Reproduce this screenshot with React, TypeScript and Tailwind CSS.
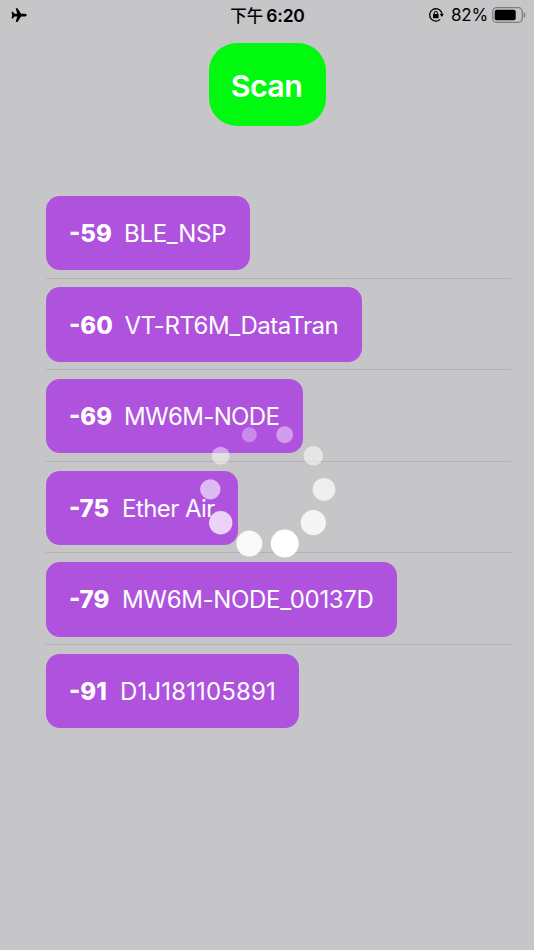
const DEVICES = [
  { rssi: -59, name: "BLE_NSP", width: "w-[204px]", offset: "w-[55px]", tracking: "tracking-[-0.3px]" },
  { rssi: -60, name: "VT-RT6M_DataTran", width: "w-[316px]", offset: "w-[55.5px]", tracking: "tracking-[-0.47px]" },
  { rssi: -69, name: "MW6M-NODE", width: "w-[257px]", offset: "w-[55px]", tracking: "tracking-[-0.65px]" },
  { rssi: -75, name: "Ether Air", width: "w-[192px]", offset: "w-[53px]", tracking: "tracking-[-0.55px]" },
  { rssi: -79, name: "MW6M-NODE_00137D", width: "w-[351px]", offset: "w-[53px]", tracking: "tracking-[-0.32px]" },
  { rssi: -91, name: "D1J181105891", width: "w-[253px]", offset: "w-[51px]", tracking: "tracking-[0.15px]" },
];

// Spinner dots, clockwise from the smallest one
const DOTS = [
  { cx: 59.3, cy: 14.8, r: 7.5, opacity: 0.33 },
  { cx: 94.7, cy: 14.8, r: 8.5, opacity: 0.43 },
  { cx: 123.3, cy: 35.7, r: 9.8, opacity: 0.54 },
  { cx: 134, cy: 69.4, r: 11.4, opacity: 0.7 },
  { cx: 123.3, cy: 102.7, r: 12.6, opacity: 0.82 },
  { cx: 94.7, cy: 123.6, r: 14, opacity: 0.99 },
  { cx: 59.3, cy: 123.6, r: 13, opacity: 0.89 },
  { cx: 30.7, cy: 102.7, r: 11.7, opacity: 0.75 },
  { cx: 20.3, cy: 69.4, r: 10.2, opacity: 0.6 },
  { cx: 30.7, cy: 35.7, r: 9, opacity: 0.47 },
];

function StatusBar() {
  return (
    <header className="grid h-[30px] grid-cols-3 items-center pl-[11px] pr-[8px] text-black">
      <svg width="16" height="16" viewBox="0 0 16 16">
        <path
          d="M15.7 8.2c0-.8-1-1.4-2.3-1.4h-3.3L6.5 1.3H4.7l1.5 5.5H3.5L1.9 4.8H.5l.7 3.4-.7 3.4h1.4l1.6-2h2.7l-1.5 5.5h1.8l3.6-5.5h3.3c1.3 0 2.3-.6 2.3-1.4Z"
          fill="currentColor"
        />
      </svg>
      <div className="flex items-center justify-center gap-[3px] whitespace-nowrap pr-[2px] leading-none">
        <span className="font-['Noto_Sans_CJK_SC',sans-serif] text-[16.5px] font-medium leading-none">下午</span>
        <span className="pt-px text-[17.5px] font-semibold tracking-[-0.2px]">6:20</span>
      </div>
      <div className="flex items-center justify-end">
        <svg className="mr-[7px] shrink-0" width="16" height="16" viewBox="0 0 16 16" fill="none">
          <path d="M13.4 5.1A6.2 6.2 0 1 0 12.2 12.4" stroke="currentColor" strokeWidth="1.3" />
          <path d="M13.4 5.1c.4.8.6 1.5.6 2.5" stroke="currentColor" strokeWidth="1.3" />
          <path d="M11.8 7h4l-2 3Z" fill="currentColor" />
          <rect x="5" y="7.1" width="5.6" height="4.2" rx=".6" fill="currentColor" />
          <path d="M6.2 7.3V6a1.6 1.6 0 0 1 3.2 0v1.3" stroke="currentColor" strokeWidth="1" />
        </svg>
        <span className="mr-[4px] pt-px text-[17px] leading-none tracking-[-0.2px]">82%</span>
        <svg className="shrink-0" width="34" height="16" viewBox="0 0 34 16">
          <rect x=".7" y=".7" width="29.6" height="14.6" rx="4" fill="none" stroke="#7c7c7e" strokeWidth="1.3" />
          <rect x="2.7" y="2.7" width="21" height="10.6" rx="2" fill="currentColor" />
          <path d="M31.8 5.2c2.1.8 2.1 4.8 0 5.6Z" fill="#7c7c7e" />
        </svg>
      </div>
    </header>
  );
}

function Spinner() {
  return (
    <svg className="absolute left-[190px] top-[420px]" width="160" height="145" viewBox="0 0 160 145">
      {DOTS.map((dot) => (
        <circle key={`${dot.cx}-${dot.cy}`} cx={dot.cx} cy={dot.cy} r={dot.r} fill="#fff" fillOpacity={dot.opacity} />
      ))}
    </svg>
  );
}

export default function App() {
  return (
    <div className="relative h-[950px] w-[534px] overflow-hidden bg-[#c6c6c8] font-['Inter',sans-serif]">
      <StatusBar />

      <main>
        <div className="flex justify-center pt-[13px]">
          <button className="h-[83px] w-[117px] rounded-[28px] bg-[#00f90f] pr-px pt-[2px] text-[30.5px] font-semibold tracking-[-0.7px] text-white">
            Scan
          </button>
        </div>

        <ul className="ml-[46px] mr-[23px] mt-[61px]">
          {DEVICES.map((device) => (
            <li
              key={device.name}
              className="flex h-[91.6px] items-center border-b border-[#b2b2b5] pt-[1.6px] last:border-b-0 last:pt-0"
            >
              <div
                className={`flex h-[74.4px] items-center whitespace-nowrap rounded-[14px] bg-[#af52de] pl-[23px] pt-[2px] text-[24px] text-white ${device.width}`}
              >
                <span className={`shrink-0 font-extrabold ${device.offset}`}>{device.rssi}</span>
                <span className={device.tracking}>{device.name}</span>
              </div>
            </li>
          ))}
        </ul>
      </main>

      <Spinner />
    </div>
  );
}
